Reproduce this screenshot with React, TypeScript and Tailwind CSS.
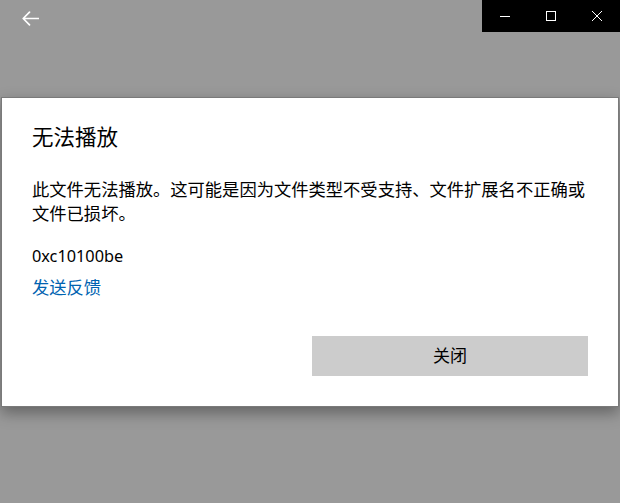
const font = { fontFamily: '"Noto Sans", "Noto Sans CJK SC", sans-serif' };

function TitleBar() {
  return (
    <div className="flex h-8 items-start justify-between">
      <button type="button" className="flex h-9 w-[60px] items-center justify-center text-white">
        <svg width="17" height="15" viewBox="0 0 17 15" fill="none">
          <path d="M16.5 7.5H1.5M7.5 1.2L1.2 7.5l6.3 6.3" stroke="currentColor" strokeWidth="1.7" strokeLinecap="round" strokeLinejoin="round" />
        </svg>
      </button>
      <div className="flex h-8 bg-black text-white">
        <div className="flex h-8 w-[46px] items-center justify-center">
          <svg width="10" height="10" viewBox="0 0 10 10">
            <path d="M0 5.5h10" stroke="currentColor" strokeWidth="1" />
          </svg>
        </div>
        <div className="flex h-8 w-[46px] items-center justify-center">
          <svg width="10" height="10" viewBox="0 0 10 10">
            <rect x="0.5" y="0.5" width="9" height="9" fill="none" stroke="currentColor" strokeWidth="1" />
          </svg>
        </div>
        <div className="flex h-8 w-[46px] items-center justify-center">
          <svg width="10" height="10" viewBox="0 0 10 10">
            <path d="M0 0L10 10M10 0L0 10" stroke="currentColor" strokeWidth="1" />
          </svg>
        </div>
      </div>
    </div>
  );
}

export default function App() {
  return (
    <div className="flex h-[503px] w-[620px] flex-col overflow-hidden bg-[#999999]" style={font}>
      <TitleBar />
      <div className="mx-[1px] mt-[65px] border border-[#7a7a7a] bg-white px-[30px] pb-[30px] pt-[25px] shadow-[0_6px_14px_rgba(0,0,0,0.35)]">
        <h1 className="text-[21.5px] leading-[28px] text-black">无法播放</h1>
        <p className="mt-[27px] whitespace-nowrap text-[17.3px] leading-[24px] text-black">
          此文件无法播放。这可能是因为文件类型不受支持、文件扩展名不正确或
          <br />
          文件已损坏。
        </p>
        <p className="mt-[18px] text-[16.3px] leading-[24px] text-black">0xc10100be</p>
        <a className="mt-[8px] block text-[17.3px] leading-[24px] text-[#0063b1]" href="#">
          发送反馈
        </a>
        <div className="mt-[36px] flex justify-end">
          <button type="button" className="h-10 w-[276px] bg-[#cccccc] text-[17px] text-black">
            关闭
          </button>
        </div>
      </div>
    </div>
  );
}
